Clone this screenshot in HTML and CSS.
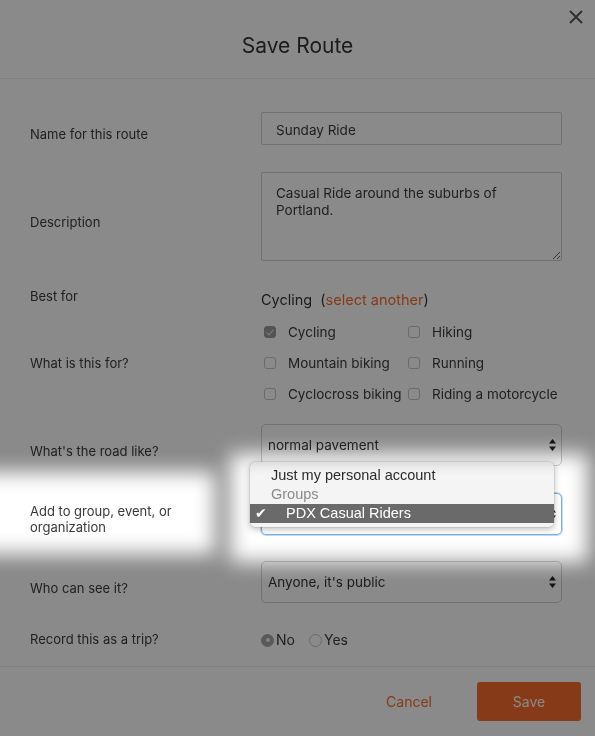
FILE: index.html
```html
<!DOCTYPE html>
<html lang="en">
<head>
  <meta charset="UTF-8">
  <title>Save Route</title>
  <link rel="stylesheet" href="styles.css">
</head>
<body>

  <!-- Modal -->
  <div class="modal">
    <header class="modal-head">
      <h1>Save Route</h1>
      <button class="close" type="button">
        <svg width="14" height="14" viewBox="0 0 14 14"><path d="M1 1L13 13M13 1L1 13" stroke="#555" stroke-width="1.8" fill="none"/></svg>
      </button>
    </header>

    <form class="modal-body">
      <div class="row field row-name">
        <label>Name for this route</label>
        <input type="text" class="text-input" value="Sunday Ride">
      </div>

      <div class="row field row-desc">
        <label>Description</label>
        <textarea class="text-area">Casual Ride around the suburbs of Portland.</textarea>
      </div>

      <div class="row row-best">
        <label>Best for</label>
        <div class="best">Cycling <span class="paren">(<a href="#">select another</a>)</span></div>
      </div>

      <div class="row row-for">
        <label>What is this for?</label>
        <div class="checks">
          <span class="check on"><i></i>Cycling</span>
          <span class="check"><i></i>Hiking</span>
          <span class="check"><i></i>Mountain biking</span>
          <span class="check"><i></i>Running</span>
          <span class="check"><i></i>Cyclocross biking</span>
          <span class="check"><i></i>Riding a motorcycle</span>
        </div>
      </div>

      <div class="row field row-road">
        <label>What's the road like?</label>
        <div class="select">normal pavement
          <svg class="arrows" width="7" height="12" viewBox="0 0 7 12"><path d="M3.5 0L7 4.5H0Z M3.5 12L7 7.5H0Z" fill="#222"/></svg>
        </div>
      </div>

      <div class="row field row-group">
        <label>Add to group, event, or organization</label>
        <!-- el texto queda tapado por el menu abierto -->
        <div class="select focused">
          <svg class="arrows" width="7" height="12" viewBox="0 0 7 12"><path d="M3.5 0L7 4.5H0Z M3.5 12L7 7.5H0Z" fill="#222"/></svg>
        </div>
      </div>

      <div class="row field row-who">
        <label>Who can see it?</label>
        <div class="select">Anyone, it's public
          <svg class="arrows" width="7" height="12" viewBox="0 0 7 12"><path d="M3.5 0L7 4.5H0Z M3.5 12L7 7.5H0Z" fill="#222"/></svg>
        </div>
      </div>

      <div class="row row-trip">
        <label>Record this as a trip?</label>
        <div class="radios">
          <span class="radio on"><i></i>No</span>
          <span class="radio"><i></i>Yes</span>
        </div>
      </div>
    </form>

    <footer class="modal-foot">
      <a href="#" class="cancel">Cancel</a>
      <button type="button" class="save">Save</button>
    </footer>
  </div>

  <!-- Menu abierto del select -->
  <div class="popup">
    <div class="opt">Just my personal account</div>
    <div class="opt group">Groups</div>
    <div class="opt picked"><span class="tick">&#10004;</span>PDX Casual Riders</div>
  </div>

  <!-- Capa oscura con zonas resaltadas -->
  <div class="dim">
    <div class="spot spot-label"></div>
    <div class="spot spot-select"></div>
  </div>

</body>
</html>
```

FILE: styles.css
```css
body {
  margin: 0;
  width: 595px;
  height: 736px;
  background: #fff;
  color: #3a3a3a;
  font-family: 'Inter', 'Roboto', sans-serif;
  font-size: 13px;
  position: relative;
  overflow: hidden;
}

.modal {
  display: flex;
  flex-direction: column;
  height: 736px;
}

.modal-head {
  height: 78px;
  border-bottom: 1px solid #ececec;
  display: flex;
  align-items: center;
  justify-content: center;
  position: relative;
}

.modal-head h1 {
  margin: 0;
  padding-top: 12px;
  font-size: 21px;
  font-weight: 400;
  color: #333;
}

.close {
  position: absolute;
  top: 10px;
  right: 12px;
  background: none;
  border: none;
  padding: 0;
  width: 14px;
  height: 14px;
}

.modal-body {
  padding: 0 33px 16px 30px;
  border-bottom: 1px solid #ececec;
}

.row {
  display: grid;
  grid-template-columns: 231px 301px;
  align-items: center;
}

.row label {
  line-height: 16px;
}

.row.field label {
  padding-top: 11px;
}

.row-name { margin-top: 33px; }
.row-desc { margin-top: 27px; }
.row-best { margin-top: 27px; align-items: start; }
.row-for { margin-top: 6px; }
.row-road { margin-top: 15px; }
.row-group { margin-top: 26px; }
.row-who { margin-top: 26px; }
.row-trip { margin-top: 25px; }

.row-group label {
  padding-right: 50px;
}

.text-input,
.text-area {
  box-sizing: border-box;
  width: 301px;
  border: 1px solid #cfcfcf;
  border-radius: 2px;
  font-family: inherit;
  font-size: 13.5px;
  color: #3a3a3a;
  padding: 0 14px;
  margin: 0;
}

.text-input {
  height: 33px;
  padding-top: 2px;
}

.text-area {
  height: 89px;
  padding-top: 12px;
  line-height: 17px;
  resize: vertical;
}

.best {
  font-size: 14.5px;
  line-height: 20px;
  padding-top: 2px;
  color: #333;
}

.paren {
  margin-left: 4px;
}

.best a {
  color: #f96b2a;
  text-decoration: none;
}

.checks {
  display: grid;
  grid-template-columns: 144px auto;
  grid-auto-rows: 31px;
  padding-left: 3px;
}

.check {
  display: flex;
  align-items: center;
  gap: 12px;
  font-size: 13.5px;
}

.check i {
  box-sizing: border-box;
  width: 12px;
  height: 12px;
  border: 1px solid #c4c4c4;
  border-radius: 3px;
  background: #fff;
  position: relative;
}

.check.on i {
  background: #9a9a9a;
  border-color: #9a9a9a;
}

.check.on i::after {
  content: "";
  position: absolute;
  left: 3px;
  top: 1px;
  width: 3px;
  height: 6px;
  border: solid #e8e8e8;
  border-width: 0 1px 1px 0;
  transform: rotate(40deg);
}

.select {
  box-sizing: border-box;
  height: 42px;
  border: 1px solid #cfcfcf;
  border-radius: 5px;
  padding: 0 0 0 6px;
  display: flex;
  align-items: center;
  font-size: 13.5px;
  color: #333;
  position: relative;
}

.select .arrows {
  position: absolute;
  right: 5px;
  top: 14px;
}

.select.focused {
  border-color: #7aaee8;
  box-shadow: 0 0 0 1px rgba(122, 174, 232, 0.45);
}

.radios {
  display: flex;
  align-items: center;
  gap: 14px;
  font-size: 14px;
  line-height: 20px;
  padding-top: 2px;
}

.radio {
  display: flex;
  align-items: center;
  gap: 2px;
}

.radio i {
  box-sizing: border-box;
  width: 13px;
  height: 13px;
  border-radius: 50%;
  border: 1px solid #c4c4c4;
  background: #fff;
  position: relative;
}

.radio.on i {
  background: #a4a4a4;
  border-color: #a4a4a4;
}

.radio.on i::after {
  content: "";
  position: absolute;
  left: 3.5px;
  top: 3.5px;
  width: 4px;
  height: 4px;
  border-radius: 50%;
  background: #eee;
}

.modal-foot {
  flex: 1;
  display: flex;
  align-items: flex-start;
  justify-content: flex-end;
  padding: 15px 14px 0 0;
}

.cancel {
  color: #f96b2a;
  text-decoration: none;
  font-size: 14px;
  line-height: 39px;
  margin-right: 45px;
}

.save {
  width: 104px;
  height: 39px;
  background: #f96b2a;
  color: #fff;
  border: none;
  border-radius: 3px;
  font-family: inherit;
  font-size: 14px;
}

/* menu nativo abierto */
.popup {
  position: absolute;
  left: 250px;
  top: 462px;
  width: 304px;
  padding: 4px 0;
  background: #f4f4f4;
  border-radius: 5px;
  box-shadow: 0 2px 7px rgba(0, 0, 0, 0.28), 0 0 0 0.5px rgba(0, 0, 0, 0.12);
  font-family: 'Liberation Sans', Arial, sans-serif;
  font-size: 14.5px;
  color: #2b2b2b;
}

.opt {
  height: 19px;
  line-height: 19px;
  padding-left: 21px;
}

.opt.group {
  color: #8a8a8a;
}

.opt.picked {
  background: #6a6a6a;
  color: #fff;
  padding-left: 36px;
  position: relative;
}

.tick {
  position: absolute;
  left: 5px;
  font-family: 'DejaVu Sans', sans-serif;
  font-size: 14px;
}

/* capa gris con huecos */
.dim {
  position: absolute;
  inset: 0;
  background: #8a8a8a;
  mix-blend-mode: multiply;
  pointer-events: none;
}

.spot {
  position: absolute;
  background: #fff;
  filter: blur(10px);
}

.spot-label {
  left: -30px;
  top: 472px;
  width: 245px;
  height: 82px;
}

.spot-select {
  left: 230px;
  top: 454px;
  width: 358px;
  height: 108px;
}
```
